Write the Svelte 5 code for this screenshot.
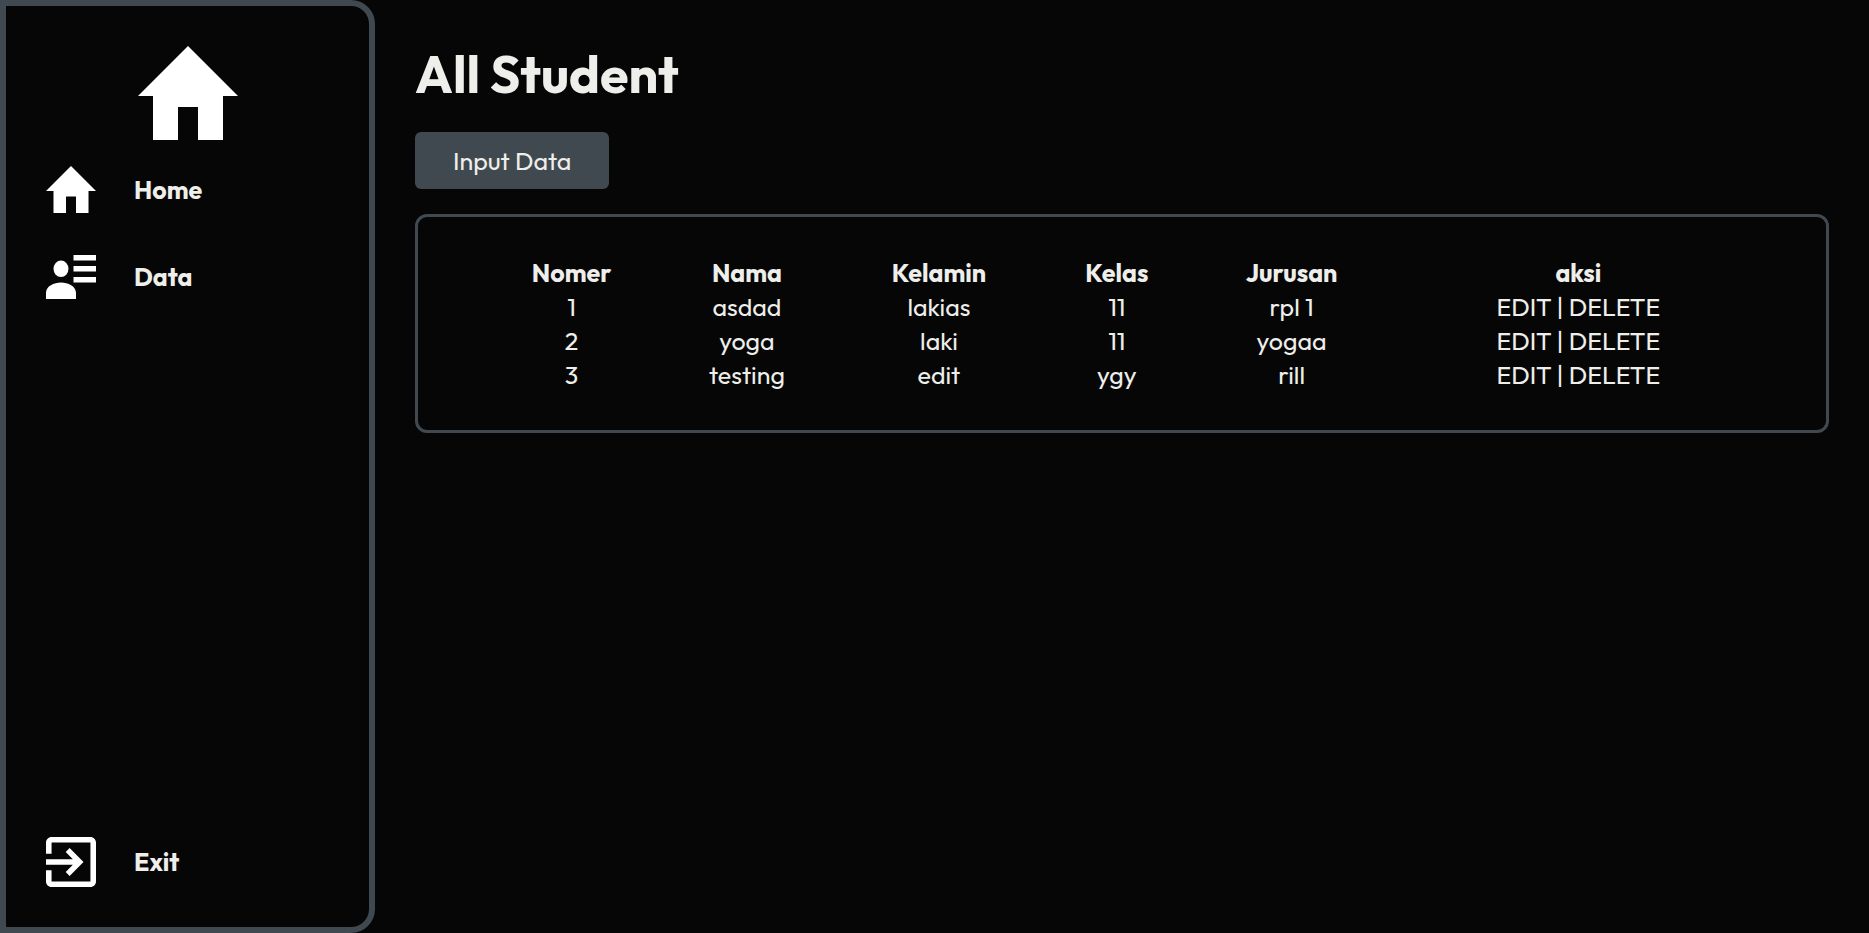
<script>
  const columns = [
    { label: 'Nomer', width: 14 },
    { label: 'Nama', width: 13.4 },
    { label: 'Kelamin', width: 16.6 },
    { label: 'Kelas', width: 11.2 },
    { label: 'Jurusan', width: 16.1 },
    { label: 'aksi', width: 28.7 }
  ];

  const students = [
    ['1', 'asdad', 'lakias', '11', 'rpl 1'],
    ['2', 'yoga', 'laki', '11', 'yogaa'],
    ['3', 'testing', 'edit', 'ygy', 'rill']
  ];
</script>

{#snippet house()}
  <svg viewBox="0 0 100 94" aria-hidden="true">
    <path d="M40 94V61h20v33h25V50h15L50 0 0 50h15v44z" />
  </svg>
{/snippet}

<div class="layout">
  <aside>
    <div class="logo">{@render house()}</div>
    <nav>
      <a href="#home">
        {@render house()}
        <span>Home</span>
      </a>
      <a href="#data">
        <svg viewBox="0 0 50 44" aria-hidden="true">
          <ellipse cx="15" cy="13.8" rx="7.5" ry="8.3" />
          <path d="M0 44v-6C0 31 8 27.5 15 27.5S30 31 30 38v6zM27.5 0H50v5.5H27.5zM27.5 11H50v5.5H27.5zM27.5 22H50v5.5H27.5z" />
        </svg>
        <span>Data</span>
      </a>
      <a class="exit" href="#exit">
        <svg viewBox="3 3 18 18" aria-hidden="true">
          <path d="M10.09 15.59L11.5 17l5-5-5-5-1.41 1.41L12.67 11H3v2h9.67l-2.58 2.59zM19 3H5c-1.11 0-2 .9-2 2v4h2V5h14v14H5v-4H3v4c0 1.1.89 2 2 2h14c1.1 0 2-.9 2-2V5c0-1.1-.9-2-2-2z" />
        </svg>
        <span>Exit</span>
      </a>
    </nav>
  </aside>

  <main>
    <h1>All Student</h1>
    <button type="button">Input Data</button>
    <section>
      <table>
        <colgroup>
          {#each columns as column}
            <col style="width: {column.width}%" />
          {/each}
        </colgroup>
        <thead>
          <tr>
            {#each columns as column}
              <th scope="col">{column.label}</th>
            {/each}
          </tr>
        </thead>
        <tbody>
          {#each students as student}
            <tr>
              {#each student as value}
                <td>{value}</td>
              {/each}
              <td><a href="#edit">EDIT</a> | <a href="#delete">DELETE</a></td>
            </tr>
          {/each}
        </tbody>
      </table>
    </section>
  </main>
</div>

<style>
  :global(body) {
    margin: 0;
    background: #060606;
  }

  .layout {
    display: flex;
    min-height: 100vh;
    color: #eeeeea;
    font-family: Outfit, Lato, sans-serif;
    font-size: 25px;
    line-height: 34px;
  }

  a {
    color: inherit;
    text-decoration: none;
  }

  svg {
    display: block;
    fill: #fff;
  }

  aside {
    box-sizing: border-box;
    flex: 0 0 375px;
    display: flex;
    flex-direction: column;
    gap: 26px;
    padding: 40px;
    border: 6px solid #414950;
    border-radius: 0 24px 24px 0;
  }

  .logo {
    width: 100px;
    margin: 0 auto;
  }

  nav {
    flex: 1;
    display: flex;
    flex-direction: column;
    gap: 42px;
  }

  nav a {
    display: flex;
    align-items: center;
    gap: 38px;
    font-weight: 700;
  }

  nav svg {
    width: 50px;
  }

  .exit {
    margin-top: auto;
  }

  main {
    flex: 1;
    min-width: 0;
    padding: 40px;
  }

  h1 {
    margin: 0 0 24px;
    font-size: 52px;
    line-height: 68px;
    font-weight: 700;
  }

  button {
    display: block;
    margin-bottom: 25px;
    padding: 12px 38px 11px;
    border: 0;
    border-radius: 6px;
    background: #414950;
    color: inherit;
    font: inherit;
  }

  section {
    padding: 39px 64px 38px;
    border: 3px solid #414950;
    border-radius: 12px;
  }

  table {
    width: 100%;
    table-layout: fixed;
    border-collapse: collapse;
  }

  th,
  td {
    padding: 0;
    text-align: center;
  }
</style>
